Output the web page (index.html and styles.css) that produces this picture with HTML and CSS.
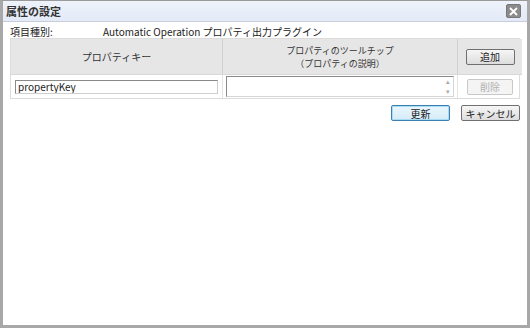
FILE: index.html
```html
<!DOCTYPE html>
<html lang="ja">
<head>
<meta charset="utf-8">
<link rel="stylesheet" href="styles.css">
</head>
<body>
<div class="dialog">
  <div class="titlebar">
    <span class="title">属性の設定</span>
    <span class="close"><svg width="9" height="9" viewBox="0 0 9 9"><path d="M1 1L8 8M8 1L1 8" stroke="#fff" stroke-width="1.8"/></svg></span>
  </div>
  <div class="content">
    <div class="kind"><span class="kind-label">項目種別:</span><span class="kind-value">Automatic Operation プロパティ出力プラグイン</span></div>
    <div class="grid">
      <div class="head c1">プロパティキー</div>
      <div class="head c2"><div class="two"><div>プロパティのツールチップ</div><div>（プロパティの説明）</div></div></div>
      <div class="head c3"><button class="btn">追加</button></div>
      <div class="cell c1"><input class="field" value="propertyKey"></div>
      <div class="cell c2"><div class="area"><span class="scroll"><span class="up">▴</span><span class="dn">▾</span></span></div></div>
      <div class="cell c3"><button class="btn disabled">削除</button></div>
    </div>
    <div class="actions">
      <button class="btn primary">更新</button>
      <button class="btn">キャンセル</button>
    </div>
  </div>
</div>
</body>
</html>
```
FILE: styles.css
```css
* { box-sizing: border-box; }
body { margin: 0; background: #fff; font-family: "Noto Sans CJK JP", "Liberation Sans", sans-serif; font-size: 10px; color: #222; }
.dialog {
  width: 530px; height: 328px;
  border: 1px solid #9a9a9a;
  border-left: 3px solid #a8a8a8;
  border-right: 3px solid #a8a8a8;
  border-bottom: 3px solid #a8a8a8;
  display: flex; flex-direction: column;
}
.titlebar {
  height: 21px; display: flex; align-items: center; justify-content: space-between;
  padding: 0 6px 0 3px;
  background: linear-gradient(#eef2fa, #e3eaf7);
  border-bottom: 1px solid #c8cfdb;
}
.title { font-weight: bold; font-size: 11px; color: #333; }
.close {
  width: 15px; height: 14px; background: #8c8c8c; border: 1px solid #777; border-radius: 2px;
  display: flex; align-items: center; justify-content: center;
}
.content { padding: 2px 7px 0 7px; }
.kind { display: flex; height: 14px; align-items: center; }
.kind-label { width: 93px; }
.grid {
  display: grid; grid-template-columns: 212px 235px 64px;
  border: 1px solid #dcdcdc;
}
.head {
  background: #e6e6e6; height: 35px; display: flex; align-items: center; justify-content: center;
  text-align: center; color: #333;
  border-right: 1px solid #d0d0d0;
}
.two { font-size: 9px; line-height: 13px; display: flex; flex-direction: column; align-items: center; }
.head.c3 { border-right: 0; }
.cell { height: 24px; display: flex; align-items: center; border-right: 1px solid #e4e4e4; border-top: 1px solid #d8d8d8; }
.cell.c3 { border-right: 0; justify-content: center; }
.cell.c1 { padding: 0 4px; }
.cell.c2 { padding: 0 3px; }
.field {
  width: 203px; height: 14px; border: 1px solid #8a8a8a; border-color: #8a8a8a #cfcfcf #cfcfcf #8a8a8a;
  font: inherit; font-size: 10px; padding: 0 2px; color: #222; background: #fff;
}
.area {
  width: 228px; height: 21px; border: 1px solid #9a9a9a; border-color: #8a8a8a #d6d6d6 #d6d6d6 #8a8a8a;
  display: flex; justify-content: flex-end; background: #fff;
}
.scroll { width: 11px; display: flex; flex-direction: column; justify-content: space-between; align-items: center; color: #aaa; font-size: 7px; line-height: 9px; }
.btn {
  font: inherit; font-size: 10px; color: #222;
  height: 16px; padding: 0; width: 49px;
  border: 1px solid #707070; border-radius: 2px;
  background: linear-gradient(#f6f6f6, #dddddd);
  display: inline-flex; align-items: center; justify-content: center;
}
.btn.disabled { color: #b0b0b0; border-color: #c8c8c8; background: #f4f4f4; width: 46px; }
.actions { display: flex; justify-content: flex-end; gap: 11px; padding: 6px 0 0 0; }
.actions .btn { width: 59px; }
.btn.primary { border-color: #3c7fb1; box-shadow: inset 0 0 0 1px #a8dcf5; background: linear-gradient(#eaf6fd, #d6ecf8); }
```
